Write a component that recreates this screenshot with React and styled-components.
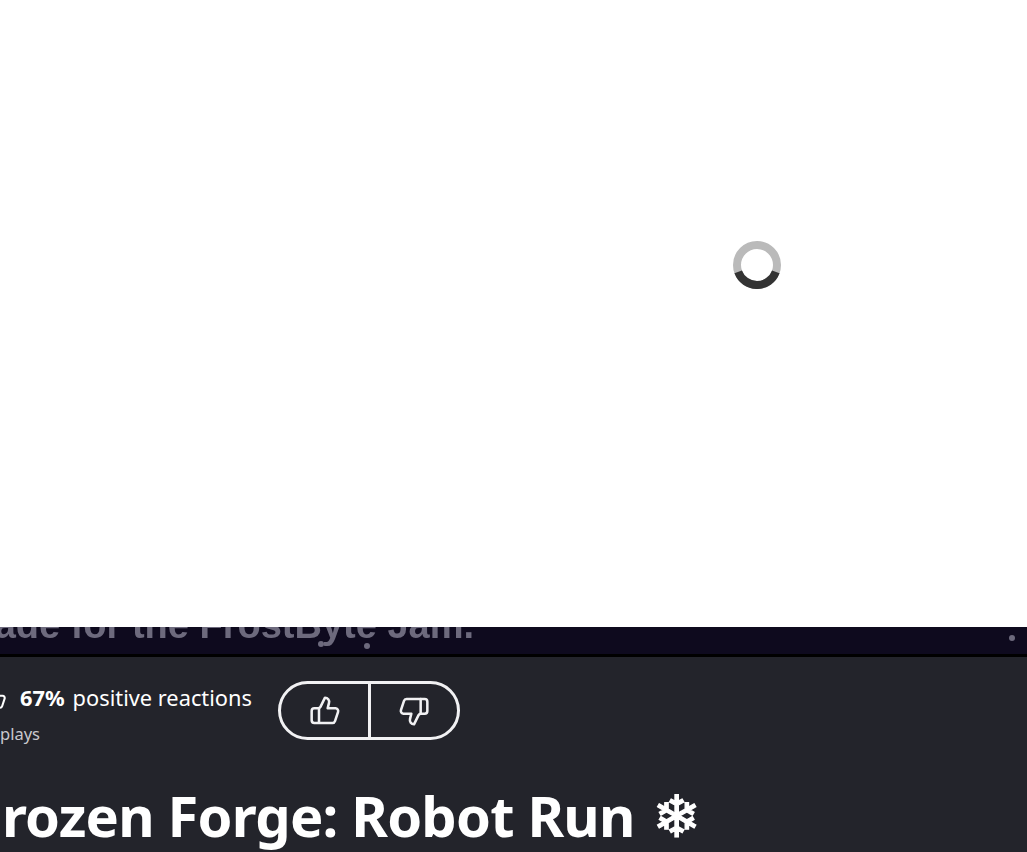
import React from "react";
import styled, { createGlobalStyle } from "styled-components";

const Global = createGlobalStyle`
  html, body { margin: 0; padding: 0; background: #23242b; }
  body { width: 1027px; height: 852px; overflow: hidden; font-family: "Noto Sans", "Open Sans", sans-serif; }
  #root { width: 1027px; height: 852px; overflow: hidden; }
`;

const Page = styled.div`
  display: flex;
  flex-direction: column;
  width: 1027px;
  height: 852px;
  overflow: hidden;
`;

const LoadingPane = styled.div`
  height: 627px;
  flex: none;
  background: #fff;
  box-sizing: border-box;
  padding: 241px 0 0 733px;
`;

const SpinnerIcon = styled.svg`
  display: block;
  width: 48px;
  height: 48px;
`;

const GameStrip = styled.div`
  position: relative;
  height: 30px;
  box-sizing: border-box;
  flex: none;
  background: #0e0a1e;
  border-bottom: 3px solid #000;
  overflow: hidden;
`;

const Caption = styled.div`
  margin: -24px 0 0 -37px;
  font-family: "Liberation Sans", Arial, sans-serif;
  font-weight: 700;
  font-size: 38px;
  line-height: 44px;
  white-space: nowrap;
  color: #6d6a7d;
  filter: blur(0.7px);
`;

const Flake = styled.span`
  position: absolute;
  width: ${(p) => p.$size}px;
  height: ${(p) => p.$size}px;
  left: ${(p) => p.$x}px;
  top: ${(p) => p.$y}px;
  border-radius: 50%;
  background: #6d6a7d;
  filter: blur(0.5px);
`;

const Panel = styled.div`
  flex: 1;
  background: #23242b;
  color: #fff;
  padding: 24px 0 0;
`;

const StatsRow = styled.div`
  display: flex;
  align-items: flex-start;
  margin-left: -19px;
`;

const Stats = styled.div`
  width: 297px;
  flex: none;
`;

const Reactions = styled.div`
  display: flex;
  align-items: center;
  height: 34px;
  font-size: 21.8px;
  line-height: 34px;
  white-space: nowrap;
  svg { flex: none; margin-right: 13px; }
  b { font-weight: 700; margin-right: 8px; }
`;

const Plays = styled.div`
  margin-top: 8px;
  font-size: 16.5px;
  line-height: 22px;
  color: #c9c9ce;
  white-space: nowrap;
  padding-left: 19px;
`;

const Votes = styled.div`
  display: flex;
  width: 182px;
  height: 59px;
  flex: none;
  box-sizing: border-box;
  border: 3px solid #f1f1f3;
  border-radius: 30px;
  overflow: hidden;
`;

const VoteButton = styled.button`
  flex: ${(p) => (p.$first ? "0 0 90px" : "1")};
  display: flex;
  align-items: center;
  justify-content: center;
  box-sizing: border-box;
  padding: 0;
  background: transparent;
  color: #f1f1f3;
  border: 0;
  border-right: ${(p) => (p.$first ? "3px solid #f1f1f3" : "0")};
`;

const Title = styled.h1`
  margin: 37px 0 0 -28px;
  font-size: 56px;
  line-height: 66px;
  font-weight: 700;
  letter-spacing: -0.8px;
  white-space: nowrap;
`;

const SnowGlyph = styled.span`
  margin-left: 4px;
  font-family: "DejaVu Sans", sans-serif;
  font-weight: 400;
  font-size: 58px;
  line-height: 0;
  letter-spacing: 0;
  -webkit-text-stroke: 1.2px #fff;
`;

const ThumbUp = ({ size = 32 }) => (
  <svg width={size} height={size} viewBox="0 0 24 24" fill="none" stroke="currentColor" strokeWidth="1.9" strokeLinecap="round" strokeLinejoin="round">
    <path d="M7.5 10.5v10" />
    <path d="M15 5.9 14 10h5.9a2 2 0 0 1 1.9 2.6l-2.3 7a2 2 0 0 1-1.9 1.4H4a2 2 0 0 1-2-2v-7a2 2 0 0 1 2-2h2.8a2 2 0 0 0 1.8-1.1L12 2a3.1 3.1 0 0 1 3 3.9Z" />
  </svg>
);

const ThumbDown = () => (
  <svg width="32" height="32" viewBox="0 0 24 24" fill="none" stroke="currentColor" strokeWidth="1.9" strokeLinecap="round" strokeLinejoin="round">
    <path d="M17 14V3" />
    <path d="M9 18.1 10 14H4.1a2 2 0 0 1-1.9-2.6l2.3-7A2 2 0 0 1 6.4 3H20a2 2 0 0 1 2 2v7a2 2 0 0 1-2 2h-2.8a2 2 0 0 0-1.8 1.1L12 22a3.1 3.1 0 0 1-3-3.9Z" />
  </svg>
);

export default function App() {
  return (
    <Page>
      <Global />
      <LoadingPane>
        <SpinnerIcon viewBox="0 0 48 48" fill="none" strokeWidth="8">
          <circle cx="24" cy="24" r="20" stroke="#bababa" />
          <path d="M42.8 30.84A20 20 0 0 1 5.2 30.84" stroke="#333333" />
        </SpinnerIcon>
      </LoadingPane>
      <GameStrip>
        <Caption>Made for the FrostByte Jam.</Caption>
        <Flake $size={6} $x={318} $y={14} />
        <Flake $size={6} $x={364} $y={16} />
        <Flake $size={6} $x={1009} $y={8} />
      </GameStrip>
      <Panel>
        <StatsRow>
          <Stats>
            <Reactions>
              <ThumbUp size={26} />
              <b>67%</b>positive reactions
            </Reactions>
            <Plays>plays</Plays>
          </Stats>
          <Votes>
            <VoteButton $first aria-label="Like"><ThumbUp /></VoteButton>
            <VoteButton aria-label="Dislike"><ThumbDown /></VoteButton>
          </Votes>
        </StatsRow>
        <Title>Frozen Forge: Robot Run <SnowGlyph>❄</SnowGlyph></Title>
      </Panel>
    </Page>
  );
}
